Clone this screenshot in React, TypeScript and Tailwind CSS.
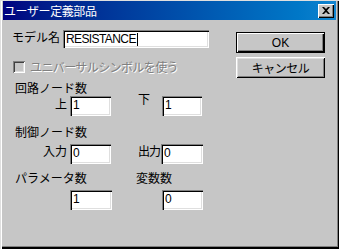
import React from "react";

const sunken =
  "bg-white shadow-[inset_1px_1px_0_#808080,inset_2px_2px_0_#000,inset_-1px_-1px_0_#fff,inset_-2px_-2px_0_#dfdfdf]";

function Field({ cls, value, cursor }: { cls: string; value: string; cursor?: boolean }) {
  return (
    <div className={`${sunken} ${cls} flex items-start pl-[3px] pt-[3px] shrink-0`}>
      <span className="font-['Liberation_Sans',sans-serif] text-[12px] leading-[13px] text-black tracking-[-0.6px]">
        {value}
      </span>
      {cursor && <span className="w-[1px] h-[13px] bg-black ml-[1px]" />}
    </div>
  );
}

export default function App() {
  return (
    <div className="w-[339px] h-[249px] bg-[#c6c6c6] flex flex-col pt-[1px] px-[3px] shadow-[inset_0_1px_0_#dfdfdf,inset_1px_0_0_#dfdfdf,inset_2px_0_0_#fff,inset_-1px_-2px_0_#000,inset_-2px_-3px_0_#808080] font-['Noto_Sans_CJK_JP','Liberation_Sans',sans-serif] text-[12px] text-black select-none">
      {/* Title bar */}
      <div className="h-[19px] bg-linear-to-r from-[#000080] to-[#1084d0] flex items-center justify-between pl-[1px] pr-[2px]">
        <span className="text-white text-[12px] leading-[14px] tracking-[-0.4px]">ユーザー定義部品</span>
        <div className="w-[16px] h-[14px] bg-[#c6c6c6] shadow-[inset_1px_1px_0_#fff,inset_-1px_-1px_0_#000,inset_-2px_-2px_0_#808080] flex items-center justify-center">
          <svg width="8" height="7" viewBox="0 0 8 7">
            <path d="M0 0h2l2 2 2-2h2L5 3.5 8 7H6L4 5 2 7H0l3-3.5z" fill="#000" />
          </svg>
        </div>
      </div>

      {/* Body */}
      <div className="flex">
        {/* Left column */}
        <div className="w-[233px] flex flex-col">
          {/* Model name */}
          <div className="flex items-start mt-[10px] h-[18px]">
            <span className="w-[60px] pl-[9px] leading-[14px] whitespace-nowrap">モデル名</span>
            <Field cls="w-[146px] h-[18px] pt-[2px]" value="RESISTANCE" cursor />
          </div>

          {/* Checkbox */}
          <div className="flex items-center mt-[13px] h-[12px] pl-[10px]">
            <div className="w-[12px] h-[12px] bg-[#c6c6c6] shadow-[inset_1px_1px_0_#808080,inset_-1px_-1px_0_#fff,inset_2px_2px_0_#404040,inset_-2px_-2px_0_#dfdfdf]" />
            <span className="ml-[5px] leading-[14px] text-[#808080] [text-shadow:1px_1px_0_#fff] tracking-[-0.6px] whitespace-nowrap">
              ユニバーサルシンボルを使う
            </span>
          </div>

          {/* 回路ノード数 */}
          <div className="mt-[8px] h-[14px] pl-[12px] leading-[14px] whitespace-nowrap">回路ノード数</div>
          <div className="flex items-start mt-[1px] h-[20px]">
            <span className="w-[67px] shrink-0 text-right pr-[3px] leading-[14px] mt-[1px]">上</span>
            <Field cls="w-[41px] h-[20px]" value="1" />
            <span className="w-[51px] shrink-0 pl-[27px] leading-[14px] mt-[-4px]">下</span>
            <Field cls="w-[40px] h-[20px]" value="1" />
          </div>

          {/* 制御ノード数 */}
          <div className="mt-[9px] h-[14px] pl-[12px] leading-[14px] whitespace-nowrap">制御ノード数</div>
          <div className="flex items-start mt-[5px] h-[20px]">
            <span className="w-[67px] shrink-0 text-right pr-[3px] leading-[14px] whitespace-nowrap">入力</span>
            <Field cls="w-[41px] h-[20px]" value="0" />
            <span className="w-[50px] shrink-0 pl-[27px] leading-[14px] tracking-[-1px] whitespace-nowrap">出力</span>
            <Field cls="w-[42px] h-[20px]" value="0" />
          </div>

          {/* パラメータ数 / 変数数 */}
          <div className="flex mt-[7px] h-[14px] leading-[14px] whitespace-nowrap">
            <span className="w-[133px] shrink-0 pl-[12px]">パラメータ数</span>
            <span>変数数</span>
          </div>
          <div className="flex items-start mt-[5px] h-[20px]">
            <span className="w-[67px] shrink-0" />
            <Field cls="w-[42px] h-[20px]" value="1" />
            <span className="w-[50px] shrink-0" />
            <Field cls="w-[41px] h-[20px]" value="0" />
          </div>
        </div>

        {/* Right column: buttons */}
        <div className="flex flex-col mt-[12px] gap-[4px]">
          <div className="w-[89px] h-[21px] border border-black bg-[#c6c6c6] shadow-[inset_1px_1px_0_#fff,inset_-1px_-1px_0_#000,inset_-2px_-2px_0_#808080] flex items-center justify-center">
            <span className="font-['Liberation_Sans',sans-serif] text-[12px] leading-[14px]">OK</span>
          </div>
          <div className="w-[89px] h-[21px] bg-[#c6c6c6] shadow-[inset_1px_1px_0_#fff,inset_-1px_-1px_0_#000,inset_2px_2px_0_#dfdfdf,inset_-2px_-2px_0_#808080] flex items-center justify-center">
            <span className="text-[12px] leading-[14px] tracking-[-0.5px]">キャンセル</span>
          </div>
        </div>
      </div>
    </div>
  );
}
